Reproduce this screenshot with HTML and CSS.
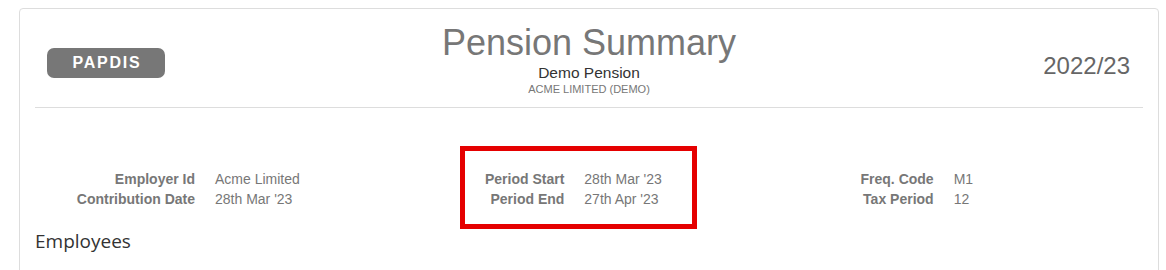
FILE: index.html
```html
<!DOCTYPE html>
<html>
<head>
<meta charset="utf-8">
<link rel="stylesheet" href="styles.css">
</head>
<body>
<div class="page">
  <div class="card">
    <div class="header">
      <div class="header-left"><span class="badge">PAPDIS</span></div>
      <div class="header-center">
        <h1 class="title">Pension Summary</h1>
        <div class="subtitle">Demo Pension</div>
        <div class="company">ACME LIMITED (DEMO)</div>
      </div>
      <div class="header-right"><span class="year">2022/23</span></div>
    </div>
    <hr class="divider">
    <div class="info">
      <dl class="dl">
        <dt>Employer Id</dt><dd>Acme Limited</dd>
        <dt>Contribution Date</dt><dd>28th Mar '23</dd>
      </dl>
      <dl class="dl dl-marked">
        <dt>Period Start</dt><dd>28th Mar '23</dd>
        <dt>Period End</dt><dd>27th Apr '23</dd>
        <span class="highlight"></span>
      </dl>
      <dl class="dl">
        <dt>Freq. Code</dt><dd>M1</dd>
        <dt>Tax Period</dt><dd>12</dd>
      </dl>
    </div>
    <h3 class="section">Employees</h3>
  </div>
</div>
</body>
</html>
```
FILE: styles.css
```css
html, body {
  margin: 0;
  padding: 0;
  background: #fff;
}
body {
  font-family: "Liberation Sans", Arial, sans-serif;
  font-size: 14px;
  line-height: 20px;
  color: #333;
}
.page {
  padding: 8px 0 0 19px;
}
.card {
  box-sizing: border-box;
  width: 1140px;
  height: 300px;
  border: 1px solid #ddd;
  border-radius: 4px;
  padding: 14px 15px 0 15px;
}
.header {
  display: grid;
  grid-template-columns: 1fr auto 1fr;
  align-items: start;
}
.header-left {
  padding: 25px 0 0 12px;
}
.badge {
  display: inline-block;
  box-sizing: border-box;
  width: 118px;
  height: 30px;
  line-height: 30px;
  background: #777;
  color: #fff;
  border-radius: 7px;
  font-weight: bold;
  font-size: 16px;
  letter-spacing: 1.8px;
  text-align: center;
  padding-left: 2px;
}
.header-center {
  text-align: center;
}
.title {
  margin: 0;
  font-size: 36px;
  line-height: 40px;
  font-weight: normal;
  color: #777;
}
.subtitle {
  font-size: 15.5px;
  line-height: 19px;
  color: #333;
}
.company {
  font-size: 11px;
  line-height: 14px;
  color: #777;
}
.header-right {
  text-align: right;
  padding: 29px 13px 0 0;
}
.year {
  font-size: 24px;
  line-height: 28px;
  color: #666;
}
.divider {
  border: 0;
  border-top: 1px solid #ddd;
  margin: 11px 0 0 0;
  height: 0;
}
.info {
  display: grid;
  grid-template-columns: repeat(3, 1fr);
  margin-top: 61px;
}
.dl {
  margin: 0;
  color: #777;
}
.dl dt {
  float: left;
  clear: left;
  width: 160px;
  text-align: right;
  font-weight: bold;
  white-space: nowrap;
}
.dl dd {
  margin-left: 180px;
}
.dl-marked {
  position: relative;
}
.highlight {
  position: absolute;
  left: 56px;
  top: -23px;
  width: 237px;
  height: 83px;
  box-sizing: border-box;
  border: 5px solid #e50000;
}
.section {
  margin: 21px 0 0 0;
  font-family: "Open Sans", "Liberation Sans", sans-serif;
  font-size: 19px;
  line-height: 22px;
  font-weight: normal;
  color: #333;
}
```
